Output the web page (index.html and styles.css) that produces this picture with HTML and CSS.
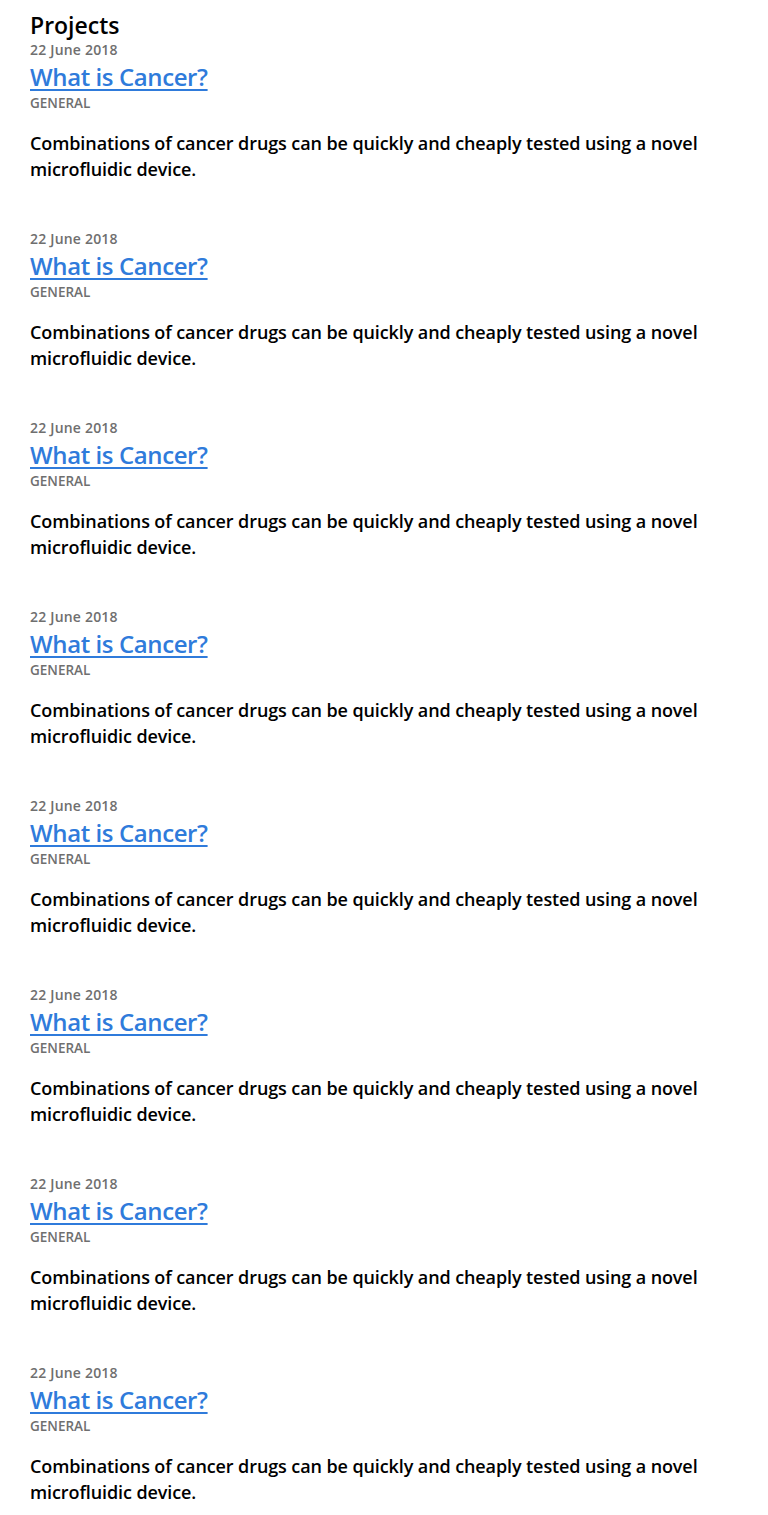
FILE: index.html
```html
<!DOCTYPE html>
<html lang="en">
<head>
<meta charset="utf-8">
<title>Projects</title>
<link rel="stylesheet" href="styles.css">
</head>
<body>
<main class="page">
  <h1 class="page-title">Projects</h1>
  <ul class="list">
    <li class="item">
      <div class="date">22 June 2018</div>
      <a class="title" href="#">What is Cancer?</a>
      <div class="category">GENERAL</div>
      <p class="desc">Combinations of cancer drugs can be quickly and cheaply tested using a novel microfluidic device.</p>
    </li>
    <li class="item">
      <div class="date">22 June 2018</div>
      <a class="title" href="#">What is Cancer?</a>
      <div class="category">GENERAL</div>
      <p class="desc">Combinations of cancer drugs can be quickly and cheaply tested using a novel microfluidic device.</p>
    </li>
    <li class="item">
      <div class="date">22 June 2018</div>
      <a class="title" href="#">What is Cancer?</a>
      <div class="category">GENERAL</div>
      <p class="desc">Combinations of cancer drugs can be quickly and cheaply tested using a novel microfluidic device.</p>
    </li>
    <li class="item">
      <div class="date">22 June 2018</div>
      <a class="title" href="#">What is Cancer?</a>
      <div class="category">GENERAL</div>
      <p class="desc">Combinations of cancer drugs can be quickly and cheaply tested using a novel microfluidic device.</p>
    </li>
    <li class="item">
      <div class="date">22 June 2018</div>
      <a class="title" href="#">What is Cancer?</a>
      <div class="category">GENERAL</div>
      <p class="desc">Combinations of cancer drugs can be quickly and cheaply tested using a novel microfluidic device.</p>
    </li>
    <li class="item">
      <div class="date">22 June 2018</div>
      <a class="title" href="#">What is Cancer?</a>
      <div class="category">GENERAL</div>
      <p class="desc">Combinations of cancer drugs can be quickly and cheaply tested using a novel microfluidic device.</p>
    </li>
    <li class="item">
      <div class="date">22 June 2018</div>
      <a class="title" href="#">What is Cancer?</a>
      <div class="category">GENERAL</div>
      <p class="desc">Combinations of cancer drugs can be quickly and cheaply tested using a novel microfluidic device.</p>
    </li>
    <li class="item">
      <div class="date">22 June 2018</div>
      <a class="title" href="#">What is Cancer?</a>
      <div class="category">GENERAL</div>
      <p class="desc">Combinations of cancer drugs can be quickly and cheaply tested using a novel microfluidic device.</p>
    </li>
  </ul>
</main>
</body>
</html>
```

FILE: styles.css
```css
* { box-sizing: border-box; }
html, body { margin: 0; padding: 0; background: #fff; }
body {
  font-family: "Open Sans", "Noto Sans", sans-serif;
  font-weight: 600;
  color: #000;
}
.page {
  padding: 11px 30px 0;
}
.page-title {
  margin: 0 0 2px;
  font-size: 23px;
  line-height: 28px;
  font-weight: 600;
}
.list {
  list-style: none;
  margin: 0;
  padding: 0;
  display: flex;
  flex-direction: column;
  gap: 48px;
}
.item {
  display: flex;
  flex-direction: column;
  align-items: flex-start;
}
.date {
  font-size: 14px;
  line-height: 18px;
  letter-spacing: 0.2px;
  color: #6f6f6f;
}
.title {
  font-size: 24px;
  line-height: 36px;
  letter-spacing: -0.4px;
  color: #2f7bdb;
  text-decoration: underline;
  text-decoration-thickness: 2px;
  text-underline-offset: 3px;
}
.category {
  font-size: 13.5px;
  line-height: 16px;
  color: #6f6f6f;
}
.desc {
  margin: 19px 0 0;
  font-size: 18px;
  line-height: 26px;
  letter-spacing: -0.1px;
  max-width: 700px;
}
```
